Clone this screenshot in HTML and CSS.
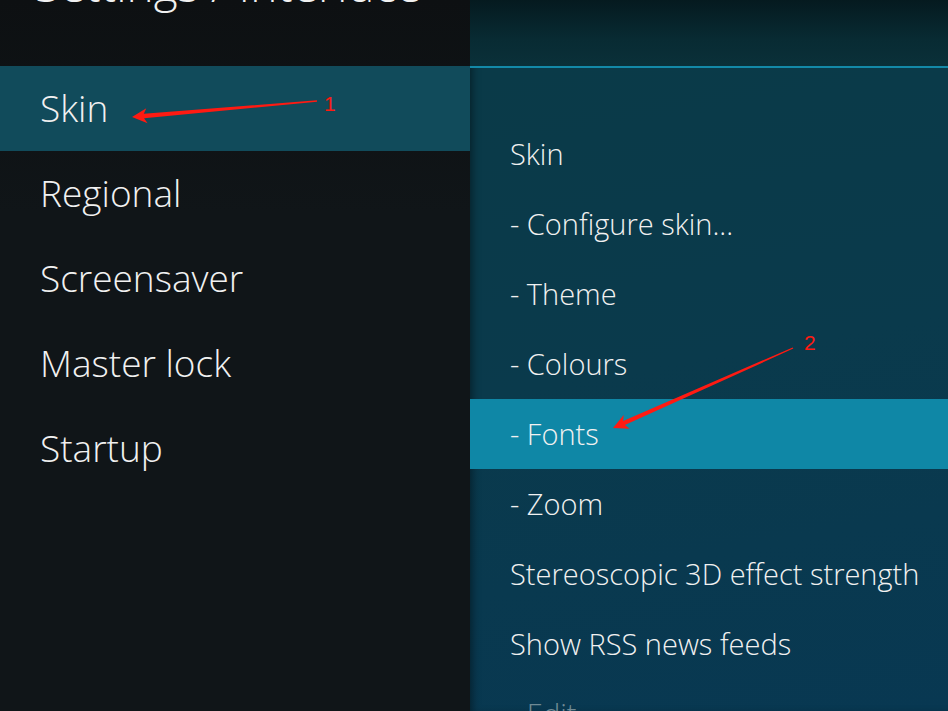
FILE: index.html
```html
<!DOCTYPE html>
<html>
<head>
<meta charset="utf-8">
<link rel="stylesheet" href="styles.css">
</head>
<body>
<div class="screen">
  <aside class="sidebar">
    <header class="sidebar-head">
      <h1 class="title">Settings / Interface</h1>
    </header>
    <ul class="cats">
      <li class="cat selected">Skin</li>
      <li class="cat">Regional</li>
      <li class="cat">Screensaver</li>
      <li class="cat">Master lock</li>
      <li class="cat">Startup</li>
    </ul>
  </aside>
  <main class="panel">
    <div class="panel-head"></div>
    <div class="panel-line"></div>
    <ul class="opts">
      <li class="opt">Skin</li>
      <li class="opt">- Configure skin...</li>
      <li class="opt">- Theme</li>
      <li class="opt">- Colours</li>
      <li class="opt focused">- Fonts</li>
      <li class="opt">- Zoom</li>
      <li class="opt">Stereoscopic 3D effect strength</li>
      <li class="opt">Show RSS news feeds</li>
      <li class="opt dim">- Edit</li>
    </ul>
  </main>
  <svg class="annot" width="948" height="711" viewBox="0 0 948 711">
    <polygon fill="#ff1a12" points="316.94,100.3 143.8,113.8 146.3,108.2 132,117 147.6,123.2 144.1,118.2 317.06,101.7"/>
    <polygon fill="#ff1a12" points="792.7,347.4 623.1,421.1 623.7,415.1 613,428 629.7,428.8 624.9,425.1 793.3,348.6"/>
    <text x="324" y="111" class="num">1</text>
    <text x="804" y="350" class="num">2</text>
  </svg>
</div>
</body>
</html>
```

FILE: styles.css
```css
html, body {
  margin: 0;
  padding: 0;
  width: 948px;
  height: 711px;
  overflow: hidden;
  background: #101417;
}
.screen {
  position: relative;
  display: flex;
  width: 948px;
  height: 711px;
  overflow: hidden;
  font-family: "Open Sans", "Noto Sans", sans-serif;
  font-weight: 300;
  color: #f1f1f1;
}
ul { list-style: none; margin: 0; padding: 0; }

.sidebar {
  width: 470px;
  flex: none;
  background: linear-gradient(180deg, #0d1012 0%, #101518 30%, #101518 100%);
}
.sidebar-head {
  height: 66px;
  overflow: hidden;
}
.title {
  margin: -41px 0 0 35px;
  font-weight: 300;
  font-size: 46px;
  line-height: 50px;
  white-space: nowrap;
}
.cat {
  height: 85px;
  display: flex;
  align-items: center;
  padding-left: 40px;
  font-size: 37px;
  padding-bottom: 3px;
  box-sizing: border-box;
}
.cat.selected { background: #114b5b; }

.panel {
  flex: 1;
  background: linear-gradient(170deg, #0a3a47 0%, #0a3a4c 50%, #083852 100%);
  box-shadow: inset 6px 0 8px -4px rgba(0,0,0,0.45);
}
.panel-head {
  height: 66px;
  background: linear-gradient(180deg, #051a1f 0%, #082b33 60%, #0a3039 100%);
}
.panel-line {
  height: 2px;
  background: #1389a8;
}
.opts { padding-top: 51px; }
.opt {
  height: 70px;
  display: flex;
  align-items: center;
  padding-left: 40px;
  padding-bottom: 1px;
  box-sizing: border-box;
  font-size: 29px;
  white-space: nowrap;
}
.opt.focused { background: #0f87a6; }
.opt.dim { color: #6f8a94; }

.annot {
  position: absolute;
  left: 0;
  top: 0;
  pointer-events: none;
}
.num {
  font-family: "Liberation Sans", sans-serif;
  font-size: 21px;
  fill: #ff1a12;
}
```
